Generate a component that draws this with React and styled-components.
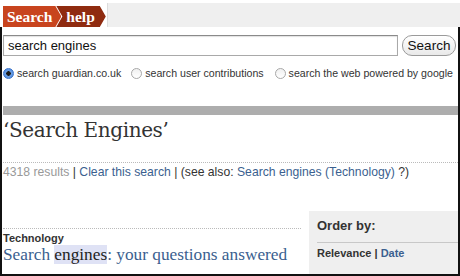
import React from 'react';
import styled, { createGlobalStyle } from 'styled-components';

const GlobalStyle = createGlobalStyle`
  html, body {
    margin: 0;
    padding: 0;
    background: #fff;
    font-family: "Liberation Sans", Arial, sans-serif;
    -webkit-font-smoothing: antialiased;
  }
`;

const Page = styled.div`
  width: 460px;
  height: 276px;
  overflow: hidden;
  display: flex;
  flex-direction: column;
`;

const Header = styled.div`
  display: flex;
  align-items: stretch;
  height: 24px;
  margin-top: 3px;
  padding-left: 3px;
`;

const Tabs = styled.div`
  display: flex;
  align-items: stretch;
  padding-top: 3px;
`;

const Tab = styled.div`
  display: flex;
  align-items: center;
  padding: ${p => (p.$first ? '0 9px 0 4px' : '0 11px 0 10px')};
  margin-left: ${p => (p.$first ? '0' : '-5px')};
  background: ${p => (p.$first ? '#c8441e' : '#8f2b10')};
  color: #fff;
  font-family: "Liberation Serif", "Times New Roman", serif;
  font-weight: bold;
  font-size: 15.5px;
  white-space: nowrap;
  clip-path: ${p =>
    p.$first
      ? 'polygon(0 0, calc(100% - 6px) 0, 100% 50%, calc(100% - 6px) 100%, 0 100%)'
      : 'polygon(0 0, calc(100% - 6px) 0, 100% 50%, calc(100% - 6px) 100%, 0 100%, 6px 50%)'};
`;

const Filler = styled.div`
  flex: 1;
  background: #efefef;
  border-left: 1px solid #dcdcdc;
  margin-left: 1px;
`;

const Body = styled.div`
  flex: 1;
  display: flex;
  flex-direction: column;
  border-left: 2px solid #111;
  border-right: 2px solid #111;
  border-bottom: 2px solid #111;
  padding-top: 8px;
`;

const SearchRow = styled.div`
  display: flex;
  align-items: center;
  gap: 4px;
  padding: 0 2px 0 1px;
`;

const Input = styled.div`
  flex: 1;
  height: 19px;
  border: 1px solid #a9a9a9;
  border-top-color: #8a8a8a;
  box-shadow: inset 0 1px 1px rgba(0, 0, 0, 0.12);
  display: flex;
  align-items: center;
  padding-left: 4px;
  font-size: 13px;
  color: #111;
`;

const Button = styled.div`
  width: 52px;
  height: 19px;
  border: 1px solid #9a9a9a;
  border-radius: 10px;
  background: linear-gradient(#ffffff, #e9e9e9);
  display: flex;
  align-items: center;
  justify-content: center;
  font-size: 13.5px;
  color: #111;
`;

const RadioRow = styled.div`
  display: flex;
  align-items: center;
  padding: 11px 0 0 1px;
  font-size: 10.6px;
  color: #333;
  white-space: nowrap;
`;

const RadioItem = styled.label`
  display: flex;
  align-items: center;
  flex-shrink: 0;
  gap: 3px;
  margin-right: ${p => p.$gap || 0}px;
`;

const Radio = styled.span`
  width: 11px;
  height: 11px;
  flex-shrink: 0;
  border-radius: 50%;
  box-sizing: border-box;
  border: 1px solid ${p => (p.$on ? '#3a72c8' : '#a8a8a8')};
  background: ${p =>
    p.$on
      ? 'radial-gradient(circle, #1a1a1a 0 2px, #6fa2e6 2.5px, #3f7fd8 100%)'
      : 'linear-gradient(#f0f0f0, #ffffff)'};
`;

const Divider = styled.div`
  height: 9px;
  background: #adadad;
  margin: 27px 0 0 1px;
`;

const Title = styled.h1`
  margin: 3px 0 0 1px;
  font-family: "DejaVu Serif", Georgia, serif;
  font-weight: normal;
  font-size: 20px;
  letter-spacing: -0.4px;
  color: #333;
  line-height: 24px;
`;

const Dotted = styled.div`
  border-top: 1px dotted #bbb;
  margin: ${p => p.$m || '0'};
`;

const Results = styled.div`
  padding: 2px 0 0 1px;
  font-size: 12.2px;
  color: #333;
  white-space: nowrap;
`;

const Muted = styled.span`
  color: #999;
`;

const Link = styled.span`
  color: #3b5f8f;
`;

const Lower = styled.div`
  flex: 1;
  display: flex;
  align-items: flex-end;
  margin-top: 32px;
`;

const ResultCol = styled.div`
  width: 298px;
  flex-shrink: 0;
  padding-left: 1px;
  padding-bottom: 9px;
`;

const Section = styled.div`
  font-size: 11px;
  font-weight: bold;
  color: #333;
  margin-top: 3px;
`;

const Headline = styled.div`
  font-family: "Liberation Serif", "Times New Roman", serif;
  font-size: 17.3px;
  color: #3b5f8f;
  margin-top: 1px;
  line-height: 20px;
  white-space: nowrap;
`;

const Hit = styled.span`
  background: #dfe2f5;
  color: #222;
`;

const Panel = styled.div`
  flex: 1;
  align-self: stretch;
  background: #efefef;
  margin-left: 8px;
  padding: 7px 0 0 8px;
`;

const PanelTitle = styled.div`
  font-size: 13px;
  font-weight: bold;
  color: #333;
  padding-bottom: 9px;
  border-bottom: 1px solid #c8c8c8;
`;

const Sort = styled.div`
  font-size: 11px;
  font-weight: bold;
  color: #333;
  padding-top: 4px;
`;

export default function App() {
  return (
    <>
      <GlobalStyle />
      <Page>
        <Header>
          <Tabs>
            <Tab $first>Search</Tab>
            <Tab>help</Tab>
          </Tabs>
          <Filler />
        </Header>
        <Body>
          <SearchRow>
            <Input>search engines</Input>
            <Button>Search</Button>
          </SearchRow>
          <RadioRow>
            <RadioItem $gap={10}><Radio $on />search guardian.co.uk</RadioItem>
            <RadioItem $gap={11}><Radio />search user contributions</RadioItem>
            <RadioItem><Radio />search the web powered by google</RadioItem>
          </RadioRow>
          <Divider />
          <Title>‘Search Engines’</Title>
          <Dotted $m="20px 0 0 1px" />
          <Results>
            <Muted>4318 results</Muted> | <Link>Clear this search</Link> | (see also:{' '}
            <Link>Search engines (Technology)</Link> ?)
          </Results>
          <Lower>
            <ResultCol>
              <Dotted />
              <Section>Technology</Section>
              <Headline>
                Search <Hit>engines</Hit>: your questions answered
              </Headline>
            </ResultCol>
            <Panel>
              <PanelTitle>Order by:</PanelTitle>
              <Sort>
                Relevance | <Link>Date</Link>
              </Sort>
            </Panel>
          </Lower>
        </Body>
      </Page>
    </>
  );
}
